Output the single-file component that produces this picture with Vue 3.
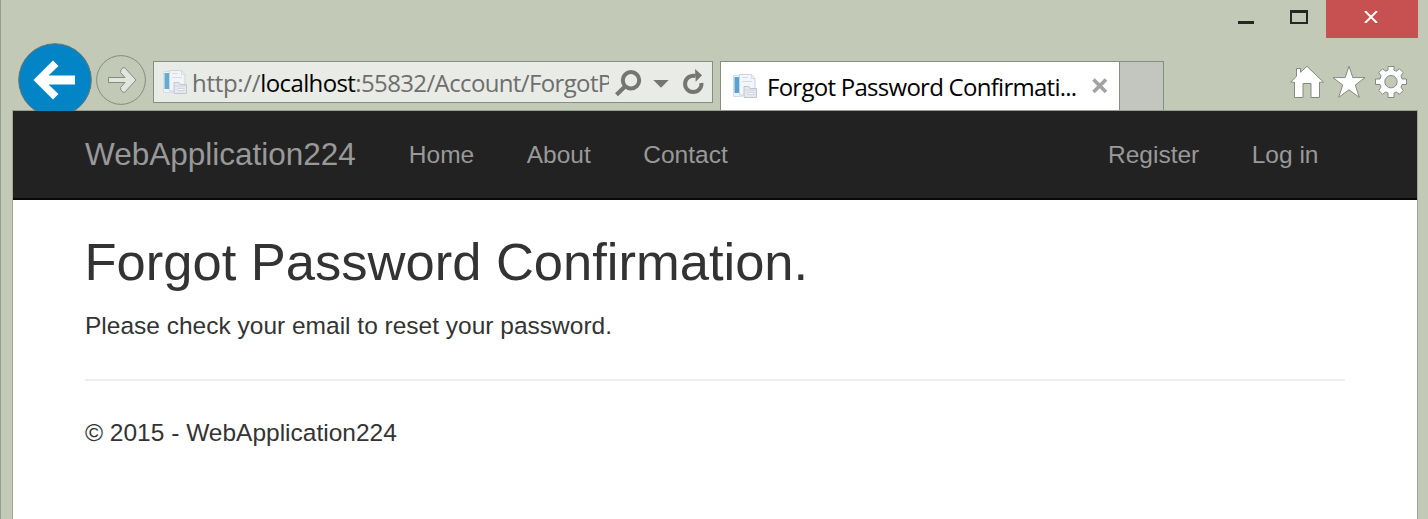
<script setup>
const leftLinks = ['Home', 'About', 'Contact']
const rightLinks = ['Register', 'Log in']
</script>

<template>
  <div class="window">
    <div class="titlebar">
      <svg class="minmax" width="104" height="38" viewBox="0 0 104 38">
        <path d="M16 21h16v3H16z" fill="#262626" />
        <path fill-rule="evenodd" d="M68 10h18v14H68zM70 13v9h14v-9z" fill="#262626" />
      </svg>
      <div class="close">
        <svg width="14" height="12" viewBox="0 0 14 12">
          <path d="M1 0 13 12M13 0 1 12" stroke="#fff" stroke-width="2" />
        </svg>
      </div>
    </div>

    <div class="toolbar">
      <svg class="back" width="74" height="74" viewBox="0 0 74 74">
        <circle cx="37" cy="37" r="36.3" fill="#0284c7" stroke="#687568" stroke-width="1" />
        <path d="M15.5 37 35 17.5 40.5 23 30.5 32.5H57V41.5H30.5L40.5 51 35 56.5Z" fill="#fff" />
      </svg>
      <svg class="forward" width="50" height="50" viewBox="0 0 50 50">
        <circle cx="25" cy="25" r="24.4" fill="none" stroke="#848c7b" />
        <path d="M12.5 22.5H29L24.5 17.5C24.5 14.8 26 12.8 28.5 12.5L40 25 28.5 37.5C26 37 24.5 35.5 24.5 32.5L29 27.5H12.5Z" fill="#e2e5dd" stroke="#858b7f" />
      </svg>

      <div class="address">
        <svg class="page-icon" width="24" height="24" viewBox="0 0 24 24">
          <path d="M.5 1.5H9V22.5H.5Z" fill="#f0f4f9" stroke="#d5dce5" />
          <path d="M1.5 3h4.5v16H1.5z" fill="#55a3d5" />
          <path d="M6.5.5H18.5L22 4.5V21H6.5Z" fill="#f3f6fa" stroke="#ccd3dc" />
          <path d="M18.5.5V4.5H22M9 3.5h6M9 7.5h10" fill="none" stroke="#d3dbe6" />
          <path d="M11 14.5V12.5H16L17 14.5H23.5V23.5H11Z" fill="#e4e8ef" stroke="#bdc4ce" />
          <path d="M11.5 16h11.5M15 18.5h6v2h-6z" fill="#fff" stroke="#ced4df" />
        </svg>
        <div class="url">http://<b>localhost</b><i>:55832/Account/ForgotP</i></div>
        <svg class="tools" width="98" height="32" viewBox="0 0 98 32">
          <circle cx="22" cy="11.3" r="8.2" fill="none" stroke="#747672" stroke-width="4" />
          <path d="M16.5 17 7.5 25.8" stroke="#747672" stroke-width="4.2" />
          <path d="M44.3 11H59.7L52 18.8Z" fill="#747672" />
          <path d="M86.5 7A8.2 8.2 0 1 0 92.4 14" fill="none" stroke="#747672" stroke-width="4" />
          <path d="M86 0 93 6.3 86.7 12.8Z" fill="#747672" />
        </svg>
      </div>

      <div class="tab">
        <svg class="page-icon" width="24" height="24" viewBox="0 0 24 24">
          <path d="M.5 1.5H9V22.5H.5Z" fill="#f0f4f9" stroke="#d5dce5" />
          <path d="M1.5 3h4.5v16H1.5z" fill="#55a3d5" />
          <path d="M6.5.5H18.5L22 4.5V21H6.5Z" fill="#f3f6fa" stroke="#ccd3dc" />
          <path d="M18.5.5V4.5H22M9 3.5h6M9 7.5h10" fill="none" stroke="#d3dbe6" />
          <path d="M11 14.5V12.5H16L17 14.5H23.5V23.5H11Z" fill="#e4e8ef" stroke="#bdc4ce" />
          <path d="M11.5 16h11.5M15 18.5h6v2h-6z" fill="#fff" stroke="#ced4df" />
        </svg>
        <div class="tab-title">Forgot Password Confirmati...</div>
        <svg class="tab-close" width="16" height="16" viewBox="0 0 16 16">
          <path d="M1.5 1.5 14 14M14 1.5 1.5 14" stroke="#a2a2a2" stroke-width="3.6" />
        </svg>
      </div>
      <div class="new-tab"></div>

      <svg class="commands" width="120" height="36" viewBox="0 0 120 36">
        <g fill="#fff" stroke="#858a80" stroke-width="1" stroke-linejoin="round">
          <path d="M.6 17.2 6.5 11.2V3.5H10.5V7.2L17 1.3 33.5 17.2H29.5V32.5H21V18.5H13V32.5H4.5V17.2Z" />
          <path d="M59 1.2 62.8 12.6H75L65.3 20 69.3 32.3 59 24.8 48.7 32.3 52.7 20 43 12.6H55.2Z" />
          <path fill-rule="evenodd" d="M98 1.5H104V5.2L106.3 6.2 109.5 3.8 113.2 7.5 111 10.8 112 14H116.5V19.5H112L111 22.2 113.2 25.5 109.5 29.2 106.3 27 104 28V32.5H98V28L95.7 27 92.5 29.2 88.8 25.5 91 22.2 90 19.5H85.5V14H90L91 10.8 88.8 7.5 92.5 3.8 95.7 6.2 98 5.2ZM101 10.5A6.2 6.2 0 1 0 101 22.9 6.2 6.2 0 1 0 101 10.5Z" />
        </g>
      </svg>
    </div>

    <div class="page">
      <nav class="navbar">
        <a class="brand">WebApplication224</a>
        <a v-for="l in leftLinks" :key="l" class="link">{{ l }}</a>
        <div class="right">
          <a v-for="l in rightLinks" :key="l" class="link">{{ l }}</a>
        </div>
      </nav>
      <main class="content">
        <h2>Forgot Password Confirmation.</h2>
        <p>Please check your email to reset your password.</p>
        <hr />
        <footer>© 2015 - WebApplication224</footer>
      </main>
    </div>
  </div>
</template>

<style>
body {
  margin: 0;
  overflow: hidden;
}
</style>

<style scoped>
* {
  box-sizing: border-box;
}
svg {
  display: block;
  flex: none;
}
.window {
  width: 1428px;
  height: 519px;
  overflow: hidden;
  background: #c2cab7;
  border-left: 1px solid #969d8c;
  display: flex;
  flex-direction: column;
}
.titlebar {
  height: 38px;
  flex: none;
  display: flex;
  justify-content: flex-end;
  padding-right: 10px;
}
.close {
  width: 92px;
  height: 38px;
  background: #c75050;
  display: flex;
  justify-content: center;
  padding: 11px 2px 0 0;
}
.toolbar {
  height: 73px;
  flex: none;
  display: flex;
  align-items: flex-start;
  overflow: hidden;
  padding-left: 17px;
  background: linear-gradient(#999f8f, #999f8f) 11px 72px / 1406px 1px no-repeat;
}
.back {
  margin-top: 5px;
}
.forward {
  margin: 17px 0 0 4px;
}
.address {
  margin: 23px 0 0 7px;
  width: 560px;
  height: 42px;
  flex: none;
  border: 1px solid #888d80;
  background: #e9ebe6;
  display: flex;
  align-items: flex-start;
  padding-left: 9px;
}
.address .page-icon {
  margin-top: 8px;
  opacity: 0.9;
}
.url {
  width: 417px;
  flex: none;
  margin-left: 5px;
  height: 40px;
  overflow: hidden;
  white-space: nowrap;
  font: 24px/42px "Open Sans", sans-serif;
  letter-spacing: -0.3px;
  color: #6e6e6e;
}
.url b {
  color: #000;
  font-weight: 400;
  letter-spacing: -0.62px;
}
.url i {
  font-style: normal;
  letter-spacing: -0.63px;
}
.tools {
  margin-top: 7px;
}
.tab {
  margin: 23px 0 0 7px;
  width: 400px;
  height: 49px;
  flex: none;
  border: 1px solid #888d80;
  border-bottom: 0;
  background: #fff;
  display: flex;
  align-items: flex-start;
}
.tab .page-icon {
  margin: 12px 0 0 12px;
}
.tab-title {
  width: 325px;
  margin-left: 10px;
  white-space: nowrap;
  font: 24px/50px "Open Sans", sans-serif;
  letter-spacing: -0.73px;
  color: #000;
}
.tab-close {
  margin-top: 16px;
}
.new-tab {
  margin-top: 23px;
  width: 44px;
  height: 49px;
  flex: none;
  border: 1px solid #888d80;
  border-width: 1px 1px 0 0;
  background: #c3c6bf;
}
.commands {
  margin: 27px 0 0 126px;
}
.page {
  width: 1406px;
  margin-left: 11px;
  flex: 1;
  border: 1px solid #a2a898;
  border-width: 0 1px;
  background: #fff;
  font: 24.5px/35px "Liberation Sans", Arial, sans-serif;
  color: #333;
}
.navbar {
  height: 89px;
  background: #222;
  border-bottom: 2px solid #080808;
  color: #999;
  display: flex;
  align-items: center;
  padding: 0 98.5px 0 72px;
}
.brand {
  font-size: 31.5px;
  margin-right: 53px;
}
.link {
  margin-right: 52.5px;
}
.right {
  margin-left: auto;
  display: flex;
}
.right .link:last-child {
  margin-right: 0;
}
.content {
  padding: 33px 72px 0;
}
h2 {
  margin: 0 0 0 -0.5px;
  font-size: 52.5px;
  line-height: 57px;
  font-weight: 400;
}
p {
  margin: 18px 0 0;
}
hr {
  margin: 36px 0 34px;
  border: 0;
  height: 2px;
  background: #eee;
}
</style>
